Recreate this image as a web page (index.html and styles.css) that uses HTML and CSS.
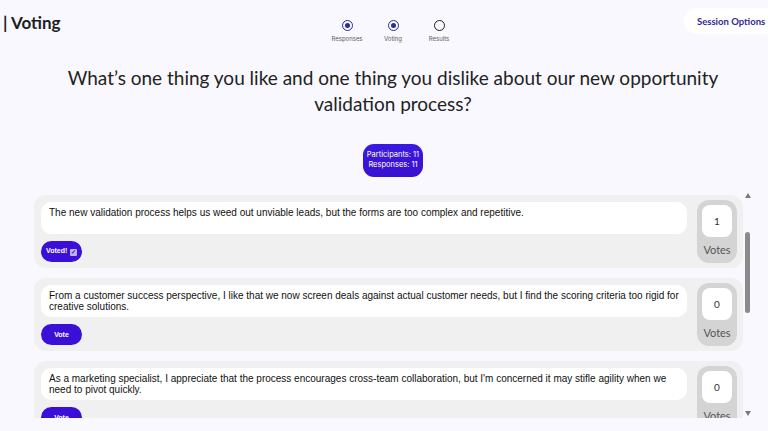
FILE: index.html
```html
<!DOCTYPE html>
<html lang="en">
<head>
  <meta charset="UTF-8" />
  <meta name="viewport" content="width=device-width, initial-scale=1" />
  <title>Voting</title>
  <link rel="stylesheet" href="styles.css">
</head>
<body>
  <header class="topbar">
    <h1 class="page-title">| Voting</h1>
    <ol class="steps">
      <li class="step done"><span class="dot"></span><span class="step-label">Responses</span></li>
      <li class="step done"><span class="dot"></span><span class="step-label">Voting</span></li>
      <li class="step"><span class="dot"></span><span class="step-label">Results</span></li>
    </ol>
    <div class="session">
      <button class="session-btn">Session Options</button>
    </div>
  </header>

  <h2 class="question">What’s one thing you like and one thing you dislike about our new opportunity validation process?</h2>

  <div class="stats">
    <div>Participants: 11</div>
    <div>Responses: 11</div>
  </div>

  <div class="list-wrap">
    <div class="responses">
      <div class="card">
        <div class="card-main">
          <p class="answer">The new validation process helps us weed out unviable leads, but the forms are too complex and repetitive.</p>
          <button class="vote-btn">Voted! <span class="check">&#10003;</span></button>
        </div>
        <div class="votes">
          <div class="count">1</div>
          <div class="votes-label">Votes</div>
        </div>
      </div>

      <div class="card">
        <div class="card-main">
          <p class="answer">From a customer success perspective, I like that we now screen deals against actual customer needs, but I find the scoring criteria too rigid for creative solutions.</p>
          <button class="vote-btn">Vote</button>
        </div>
        <div class="votes">
          <div class="count">0</div>
          <div class="votes-label">Votes</div>
        </div>
      </div>

      <div class="card">
        <div class="card-main">
          <p class="answer">As a marketing specialist, I appreciate that the process encourages cross-team collaboration, but I'm concerned it may stifle agility when we need to pivot quickly.</p>
          <button class="vote-btn">Vote</button>
        </div>
        <div class="votes">
          <div class="count">0</div>
          <div class="votes-label">Votes</div>
        </div>
      </div>
    </div>
    <div class="scrollbar">
      <span class="arrow up"></span>
      <div class="track"><div class="thumb"></div></div>
      <span class="arrow down"></span>
    </div>
  </div>
</body>
</html>
```

FILE: styles.css
```css
body {
  margin: 0;
  background: #f9f8fe;
  font-family: Lato, "Open Sans", sans-serif;
  color: #1d1d24;
  height: 431px;
  overflow: hidden;
}
.topbar {
  display: grid;
  grid-template-columns: 1fr auto 1fr;
  align-items: start;
  height: 52px;
  padding-left: 18px;
}
.page-title {
  margin: 12px 0 0 -15px;
  font-size: 17px;
  font-weight: 700;
}
.steps {
  list-style: none;
  display: flex;
  gap: 11px;
  margin: 20px 0 0 0;
  padding: 0;
}
.step {
  width: 35px;
  display: flex;
  flex-direction: column;
  align-items: center;
}
.dot {
  width: 9px;
  height: 9px;
  border: 1.5px solid #1f1f1f;
  border-radius: 50%;
  position: relative;
}
.step.done .dot {
  border-color: #2b2d9c;
}
.step.done .dot::after {
  content: "";
  position: absolute;
  left: 2px;
  top: 2px;
  width: 5px;
  height: 5px;
  border-radius: 50%;
  background: #2b2d9c;
}
.step-label {
  margin-top: 4px;
  font-size: 6px;
  color: #5a5a66;
  font-family: Inter, sans-serif;
}
.session {
  display: flex;
  justify-content: flex-end;
}
.session-btn {
  margin-top: 8px;
  width: 84px;
  height: 26px;
  border: none;
  border-radius: 13px 0 0 13px;
  background: #fff;
  color: #33289a;
  font-family: Lato, sans-serif;
  font-weight: 700;
  font-size: 9.5px;
  text-align: left;
  padding-left: 13px;
  white-space: nowrap;
}
.question {
  margin: 13px 0 0 18px;
  padding: 0 40px;
  text-align: center;
  font-weight: 400;
  font-size: 19px;
  line-height: 26px;
  color: #222;
}
.stats {
  margin: 27px auto 0;
  position: relative;
  left: 9px;
  width: 60px;
  height: 33px;
  box-sizing: border-box;
  padding-top: 6px;
  border-radius: 11px;
  background: linear-gradient(180deg, #3a1ae0, #3a10d0);
  color: #fff;
  font-size: 7.5px;
  line-height: 10px;
  text-align: center;
  font-family: Inter, sans-serif;
}
.list-wrap {
  display: flex;
  margin: 13px 16px 0 34px;
  height: 228px;
}
.responses {
  flex: 1;
  overflow: hidden;
  display: flex;
  flex-direction: column;
  gap: 10px;
  padding-top: 5px;
}
.card {
  flex: none;
  display: flex;
  align-items: center;
  gap: 10px;
  background: #f0f0f0;
  border-radius: 12px;
  padding: 5px 6px 5px 7px;
}
.card-main {
  flex: 1;
  padding: 2px 0 1px;
}
.answer {
  margin: 0;
  background: #fff;
  border-radius: 10px;
  min-height: 32px;
  box-sizing: border-box;
  padding: 5px 8px;
  font-family: "Liberation Sans", Arial, sans-serif;
  font-size: 10px;
  line-height: 11px;
  color: #111;
}
.vote-btn {
  margin-top: 7px;
  height: 21px;
  min-width: 41px;
  border: none;
  border-radius: 11px;
  background: #3a10d8;
  color: #fff;
  font-family: "Liberation Sans", Arial, sans-serif;
  font-weight: 700;
  font-size: 7px;
  padding: 0 5px;
  display: block;
}
.check {
  display: inline-block;
  width: 7px;
  height: 7px;
  line-height: 7px;
  font-size: 6px;
  background: #b9b4f0;
  color: #3a10d8;
  border-radius: 1px;
  text-align: center;
  margin-left: 1px;
  vertical-align: -1px;
}
.votes {
  width: 40px;
  height: 63px;
  box-sizing: border-box;
  padding: 5px 5px 0;
  background: #d4d4d4;
  border-radius: 12px;
  text-align: center;
}
.count {
  height: 32px;
  line-height: 32px;
  background: #fff;
  border-radius: 8px;
  font-size: 10px;
  color: #333;
}
.votes-label {
  margin-top: 6px;
  font-size: 11px;
  color: #555;
}
.scrollbar {
  width: 9px;
  display: flex;
  flex-direction: column;
  align-items: center;
  padding: 3px 0 2px;
  box-sizing: border-box;
}
.track {
  flex: 1;
  width: 5px;
}
.thumb {
  margin-top: 34px;
  height: 81px;
  background: #8a8a8a;
  border-radius: 3px;
}
.arrow {
  width: 0;
  height: 0;
  border-left: 3px solid transparent;
  border-right: 3px solid transparent;
}
.arrow.up {
  border-bottom: 5px solid #7a7a7a;
}
.arrow.down {
  border-top: 5px solid #7a7a7a;
}
```
